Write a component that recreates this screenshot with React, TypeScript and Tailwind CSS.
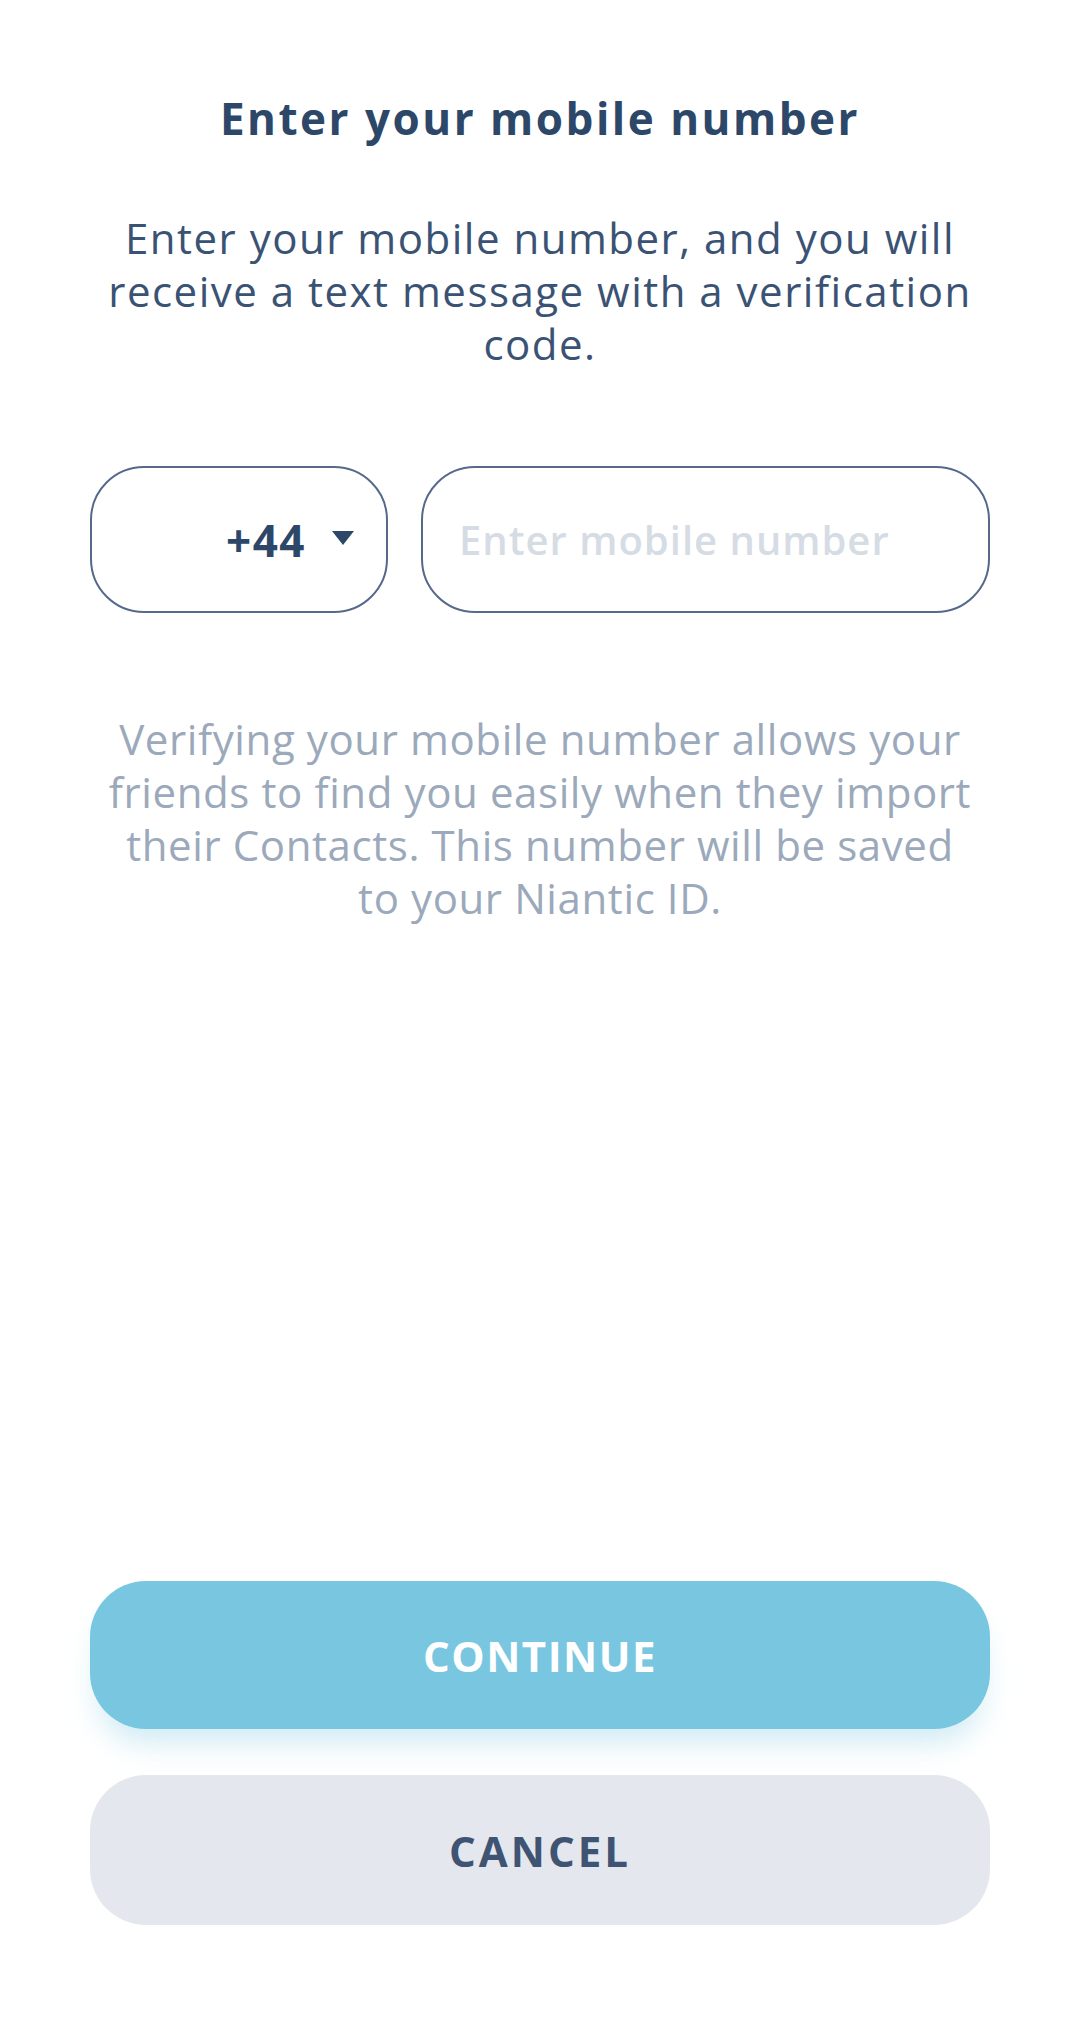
import React, { useState } from "react";

export default function App() {
  const [phone, setPhone] = useState("");

  return (
    <div
      className="w-full h-[2027px] bg-white flex flex-col px-[90px] pb-[102px]"
      style={{ fontFamily: '"Open Sans", "Liberation Sans", sans-serif' }}
    >
      {/* Header */}
      <h1 className="mt-[92px] text-center text-[44px] leading-[52px] font-bold tracking-[2.5px] text-[#2d4769]">
        Enter your mobile number
      </h1>
      <p className="mt-[67px] text-center text-[42px] leading-[53px] tracking-[1.5px] text-[#3a5273] whitespace-nowrap">
        Enter your mobile number, and you will
        <br />
        receive a text message with a verification
        <br />
        code.
      </p>

      {/* Phone inputs */}
      <div className="mt-[96px] flex gap-[33px]">
        <button className="w-[298px] h-[147px] shrink-0 rounded-[54px] border-2 border-[#56698a] flex items-center justify-end pr-[32px] gap-[26px]">
          <span className="text-[44px] font-bold tracking-[1.5px] text-[#2d4769]">+44</span>
          <svg width="22" height="14" viewBox="0 0 22 14" className="mt-[-4px]">
            <path d="M0 0 H22 L11 14 Z" fill="#2d4769" />
          </svg>
        </button>
        <div className="flex-1 h-[147px] rounded-[54px] border-2 border-[#56698a] flex items-center px-[36px]">
          <input
            value={phone}
            onChange={(e) => setPhone(e.target.value)}
            placeholder="Enter mobile number"
            className="w-full bg-transparent outline-none text-[40px] font-semibold tracking-[1px] text-[#2d4769] placeholder:text-[#d6dce4]"
          />
        </div>
      </div>

      <p className="mt-[99px] text-center text-[42px] leading-[53px] tracking-[0.6px] text-[#9ba9bb] whitespace-nowrap">
        Verifying your mobile number allows your
        <br />
        friends to find you easily when they import
        <br />
        their Contacts. This number will be saved
        <br />
        to your Niantic ID.
      </p>

      {/* Actions */}
      <button className="mt-auto h-[148px] rounded-[56px] bg-[#78c6df] shadow-[0_22px_30px_-8px_rgba(120,198,223,0.35)] text-white text-[42px] font-bold tracking-[1.5px]">
        CONTINUE
      </button>
      <button className="mt-[46px] h-[150px] rounded-[56px] bg-[#e4e7ed] text-[#3f5472] text-[42px] font-bold tracking-[3px]">
        CANCEL
      </button>
    </div>
  );
}
